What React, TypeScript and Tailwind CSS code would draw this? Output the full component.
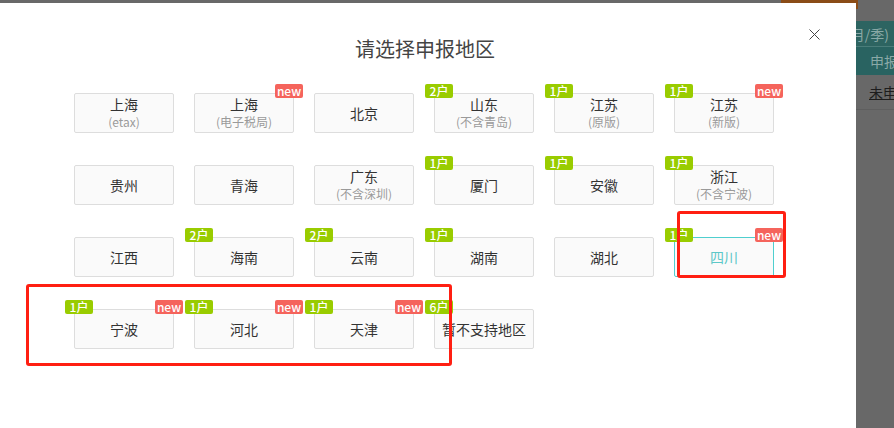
import React from "react";

type Item = { name: string; sub?: string; count?: string; isNew?: boolean; active?: boolean };

const items: Item[] = [
  { name: "上海", sub: "(etax)" },
  { name: "上海", sub: "(电子税局)", isNew: true },
  { name: "北京" },
  { name: "山东", sub: "(不含青岛)", count: "2户" },
  { name: "江苏", sub: "(原版)", count: "1户" },
  { name: "江苏", sub: "(新版)", count: "1户", isNew: true },
  { name: "贵州" },
  { name: "青海" },
  { name: "广东", sub: "(不含深圳)" },
  { name: "厦门", count: "1户" },
  { name: "安徽", count: "1户" },
  { name: "浙江", sub: "(不含宁波)", count: "1户" },
  { name: "江西" },
  { name: "海南", count: "2户" },
  { name: "云南", count: "2户" },
  { name: "湖南", count: "1户" },
  { name: "湖北" },
  { name: "四川", count: "1户", isNew: true, active: true },
  { name: "宁波", count: "1户", isNew: true },
  { name: "河北", count: "1户", isNew: true },
  { name: "天津", count: "1户", isNew: true },
  { name: "暂不支持地区", count: "6户" },
];

function Cell({ it }: { it: Item }) {
  return (
    <div
      className={
        "relative w-[100px] h-[40px] rounded-[2px] border bg-[#fafafa] flex flex-col items-center justify-center " +
        (it.active ? "border-[#4fcfcf]" : "border-[#dddddd]")
      }
    >
      <div className={"text-[14px] leading-[17px] " + (it.active ? "text-[#5cc8c8]" : "text-[#333333]")}>{it.name}</div>
      {it.sub && <div className="text-[12px] leading-[17px] text-[#9a9a9a]">{it.sub}</div>}
      {it.count && (
        <div className="absolute left-[-10px] top-[-10px] h-[14px] w-[28px] rounded-[2px] bg-[#99cc00] text-white text-[12px] leading-[14px] font-medium flex items-center justify-center">
          {it.count}
        </div>
      )}
      {it.isNew && (
        <div className="absolute right-[-10px] top-[-10px] h-[14px] w-[28px] rounded-[2px] bg-[#f5645c] text-white text-[12px] leading-[14px] font-medium flex items-center justify-center">
          new
        </div>
      )}
    </div>
  );
}

export default function App() {
  return (
    <div
      className="relative w-[894px] h-[428px] overflow-hidden bg-[#686868]"
      style={{ fontFamily: '"Noto Sans CJK SC", "Noto Sans", sans-serif' }}
    >
      {/* background page (under overlay) */}
      <div className="flex flex-col">
        <div className="flex h-[21px]">
          <div className="w-[781px]" />
          <div className="w-[77px] h-[9px] bg-[#8a4c17]" />
        </div>
        <div className="ml-[846px] flex flex-col">
          <div className="h-[26px] bg-[#2d6461] border-b border-[#4a7d7a] text-[14px] leading-[26px] text-[#8aa9a7] whitespace-nowrap">(月/季)</div>
          <div className="h-[28px] bg-[#296361] text-[14px] leading-[28px] text-[#8aa9a7] pl-[24px] whitespace-nowrap">申报</div>
          <div className="h-[35px] border-b border-[#5e5e5e] text-[14px] leading-[35px] text-[#1d1d1d] pl-[23px] whitespace-nowrap">
            <span className="underline">未申</span>
          </div>
        </div>
      </div>

      {/* modal */}
      <div className="absolute left-0 top-[3px] w-[856px] h-[440px] bg-white">
        <div className="absolute left-[809px] top-[26px] w-[11px] h-[11px]">
          <svg width="11" height="11" viewBox="0 0 11 11">
            <path d="M0.5 0.5 L10.5 10.5 M10.5 0.5 L0.5 10.5" stroke="#444" strokeWidth="1" fill="none" />
          </svg>
        </div>
        <div className="pt-[32px] flex flex-col">
          <div className="text-center text-[20px] leading-[28px] text-[#444444] pr-[6px]">请选择申报地区</div>
          <div className="mt-[30px] ml-[74px] grid grid-cols-[repeat(6,100px)] gap-x-[20px] gap-y-[32px]">
            {items.map((it, i) => (
              <Cell key={i} it={it} />
            ))}
          </div>
        </div>
      </div>

      {/* annotations */}
      <div className="absolute left-[26px] top-[284px] w-[426px] h-[82px] border-[3px] border-[#ff1f12] rounded-[3px]" />
      <div className="absolute left-[677px] top-[211px] w-[109px] h-[67px] border-[3px] border-[#ff1f12] rounded-[3px]" />
    </div>
  );
}
